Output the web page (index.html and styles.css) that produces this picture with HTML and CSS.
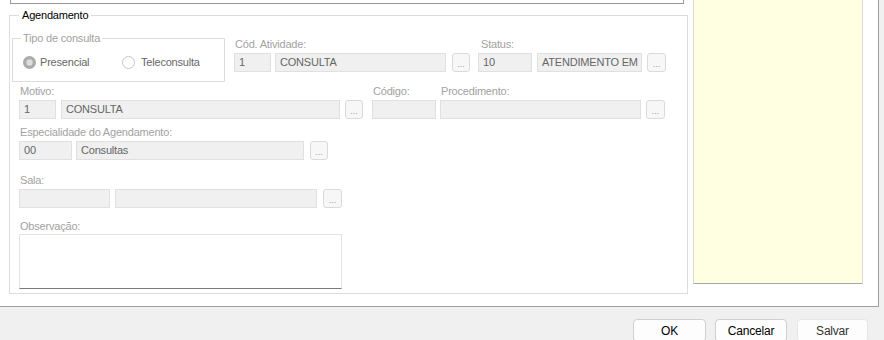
FILE: index.html
```html
<!DOCTYPE html>
<html lang="pt-BR">
<head>
  <meta charset="UTF-8"/>
  <title>Agendamento</title>
  <link rel="stylesheet" href="styles.css">
</head>
<body>

  <div class="window">
    <div class="left">
      <div class="top-box"></div>

      <div class="group">
        <div class="group-title">Agendamento</div>

        <!-- tipo + atividade + status -->
        <div class="row row-1">
          <div class="tipo">
            <div class="tipo-title">Tipo de consulta</div>
            <div class="radios">
              <span class="radio radio-first">
                <svg width="13" height="13" viewBox="0 0 13 13"><circle cx="6.5" cy="6.5" r="6.5" fill="#ababab"/><circle cx="6.5" cy="6.5" r="3.2" fill="#dedede"/></svg>
                Presencial
              </span>
              <span class="radio radio-second">
                <svg width="13" height="13" viewBox="0 0 13 13"><circle cx="6.5" cy="6.5" r="6" fill="#fff" stroke="#c4c4c4" stroke-width="1"/></svg>
                Teleconsulta
              </span>
            </div>
          </div>

          <div class="field f-atividade">
            <div class="lbl">Cód. Atividade:</div>
            <div class="controls">
              <div class="box w-37">1</div>
              <div class="box w-171">CONSULTA</div>
              <div class="dots btn-gap">...</div>
            </div>
          </div>

          <div class="field f-status">
            <div class="lbl">Status:</div>
            <div class="controls">
              <div class="box w-54">10</div>
              <div class="box w-105 gap-5">ATENDIMENTO EM</div>
              <div class="dots w-19 gap-5">...</div>
            </div>
          </div>
        </div>

        <!-- motivo + codigo + procedimento -->
        <div class="row row-2">
          <div class="field">
            <div class="lbl">Motivo:</div>
            <div class="controls">
              <div class="box w-37">1</div>
              <div class="box w-279 gap-5">CONSULTA</div>
              <div class="dots gap-5">...</div>
            </div>
          </div>
          <div class="field f-codigo">
            <div class="lbl">Código:</div>
            <div class="controls">
              <div class="box w-64"></div>
            </div>
          </div>
          <div class="field f-proc">
            <div class="lbl">Procedimento:</div>
            <div class="controls">
              <div class="box w-201"></div>
              <div class="dots w-19 gap-5">...</div>
            </div>
          </div>
        </div>

        <!-- especialidade -->
        <div class="row row-3">
          <div class="field">
            <div class="lbl">Especialidade do Agendamento:</div>
            <div class="controls">
              <div class="box w-53">00</div>
              <div class="box w-228">Consultas</div>
              <div class="dots btn-gap">...</div>
            </div>
          </div>
        </div>

        <!-- sala -->
        <div class="row row-4">
          <div class="field">
            <div class="lbl">Sala:</div>
            <div class="controls">
              <div class="box w-91"></div>
              <div class="box w-202 gap-5"></div>
              <div class="dots w-19 btn-gap">...</div>
            </div>
          </div>
        </div>

        <!-- observacao -->
        <div class="row row-5">
          <div class="field">
            <div class="lbl">Observação:</div>
            <div class="memo"></div>
          </div>
        </div>
      </div>
    </div>

    <div class="notes"></div>
  </div>

  <div class="footer">
    <button class="btn">OK</button>
    <button class="btn btn-cancel">Cancelar</button>
    <button class="btn btn-off">Salvar</button>
  </div>

</body>
</html>
```

FILE: styles.css
```css
:root {
  --label: #a2a2a2;
  --text:  #666666;
  --field: #f0f0f0;
  --edge:  #e0e0e0;
  --frame: #dcdcdc;
  --dark:  #a0a0a0;
}
* {
  box-sizing: border-box;
  margin: 0;
  padding: 0;
}
body {
  font-family: "Liberation Sans", Arial, sans-serif;
  font-size: 11px;
  letter-spacing: -0.2px;
  background: #f0f0f0;
  color: #000;
  width: 884px;
  height: 340px;
  overflow: hidden;
}
.window {
  display: flex;
  width: 879px;
  height: 307px;
  background: #fff;
  border-right: 1px solid var(--dark);
  border-bottom: 1px solid var(--dark);
}
.left {
  width: 688px;
  padding-left: 9px;
}
.top-box {
  width: 674px;
  height: 4px;
  margin-left: 1px;
  border: 1px solid #999;
  border-top: none;
}
.group {
  width: 679px;
  height: 279px;
  margin-top: 11px;
  border: 1px solid var(--frame);
}
.group-title {
  display: table;
  margin: -7px 0 0 9px;
  padding: 0 3px;
  line-height: 13px;
  background: #fff;
  color: #000;
}
.row {
  display: flex;
  align-items: flex-start;
  padding-left: 9px;
}
.row-1 {
  margin-top: 16px;
  padding-left: 2px;
}
.row-2 { margin-top: 3px; }
.row-3 { margin-top: 7px; }
.row-4 { margin-top: 14px; }
.row-5 { margin-top: 12px; }

/* tipo de consulta */
.tipo {
  width: 213px;
  height: 44px;
  border: 1px solid var(--frame);
}
.tipo-title {
  display: table;
  margin: -7px 0 0 8px;
  padding: 0 2px;
  line-height: 13px;
  background: #fff;
  color: var(--label);
}
.radios {
  display: flex;
  margin-top: 11px;
  padding-left: 10px;
}
.radio {
  display: flex;
  align-items: center;
  gap: 4px;
  line-height: 13px;
  color: var(--text);
}
.radio svg { display: block; }
.radio-first { width: 99px; }
.radio-second { gap: 6px; }

/* fields */
.field {
  display: flex;
  flex-direction: column;
}
.f-atividade { margin-left: 9px; }
.f-status { margin-left: 8px; }
.f-codigo { margin-left: 9px; }
.f-proc { margin-left: 4px; }
.lbl {
  height: 13px;
  line-height: 13px;
  padding-left: 1px;
  margin-bottom: 2px;
  color: var(--label);
  white-space: nowrap;
}
.f-status .lbl { padding-left: 3px; }
.controls {
  display: flex;
  gap: 4px;
}
.box {
  height: 19px;
  line-height: 17px;
  padding: 0 4px;
  background: var(--field);
  border: 1px solid var(--edge);
  color: var(--text);
  white-space: nowrap;
  overflow: hidden;
}
.dots {
  width: 18px;
  height: 19px;
  border: 1px solid #dadada;
  border-radius: 3px;
  background: #f7f7f7;
  color: #9c9c9c;
  font-size: 9px;
  letter-spacing: 0;
  line-height: 21px;
  text-align: center;
}
.gap-5 { margin-left: 1px; }
.btn-gap { margin-left: 2px; }
.w-19 { width: 19px; }
.w-37 { width: 37px; }
.w-53 { width: 53px; }
.w-54 { width: 54px; }
.w-64 { width: 64px; }
.w-91 { width: 91px; }
.w-105 { width: 105px; }
.w-171 { width: 171px; }
.w-201 { width: 201px; }
.w-202 { width: 202px; }
.w-228 { width: 228px; }
.w-279 { width: 279px; }
.memo {
  width: 323px;
  height: 55px;
  margin-top: -1px;
  background: #fff;
  border: 1px solid #e3e3e3;
  border-bottom: 1px solid #7a7a7a;
}

/* yellow side panel */
.notes {
  width: 170px;
  height: 284px;
  margin-left: 5px;
  background: #ffffe1;
  border-left: 1px solid #d9d9d9;
  border-right: 1px solid #d9d9d9;
  border-bottom: 1px solid #a8a8a8;
}

/* dialog buttons */
.footer {
  display: flex;
  justify-content: flex-end;
  gap: 9px;
  padding: 12px 16px 0 0;
}
.btn {
  width: 73px;
  height: 23px;
  font-family: "Liberation Sans", Arial, sans-serif;
  font-size: 12px;
  letter-spacing: -0.2px;
  color: #000;
  background: #fdfdfd;
  border: 1px solid #d0d0d0;
  border-radius: 4px;
}
.btn-cancel { width: 72px; }
.btn-off {
  width: 71px;
  margin-left: 1px;
  color: #333;
  border-color: #e5e5e5;
}
```
